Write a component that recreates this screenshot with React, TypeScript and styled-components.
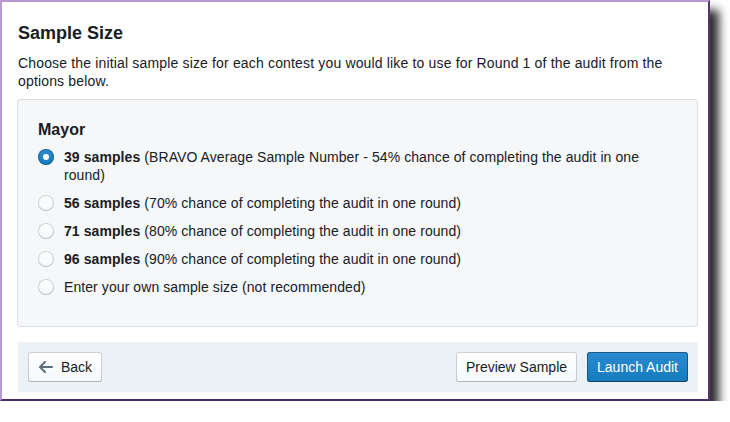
import styled, { createGlobalStyle } from "styled-components";

const GlobalStyle = createGlobalStyle`
  body {
    margin: 0;
    background: #ffffff;
    font-family: "Liberation Sans", Arial, sans-serif;
    color: #182026;
  }
`;

const options = [
  { samples: 39, detail: "(BRAVO Average Sample Number - 54% chance of completing the audit in one round)" },
  { samples: 56, detail: "(70% chance of completing the audit in one round)" },
  { samples: 71, detail: "(80% chance of completing the audit in one round)" },
  { samples: 96, detail: "(90% chance of completing the audit in one round)" },
];

const Card = styled.div`
  width: 710px;
  box-sizing: border-box;
  background: #ffffff;
  border: 2px solid;
  border-color: #b797d1 #55356f #4f2f68 #b99bd3;
  padding: 19px 10px 7px 16px;
  box-shadow: 9px 10px 9px rgba(0, 0, 0, 0.82);
`;

const Title = styled.h2`
  margin: 0 0 9px;
  font-size: 18px;
  line-height: 24px;
  font-weight: 700;
`;

const Description = styled.p`
  margin: 0 0 9px;
  font-size: 14px;
  line-height: 18px;
  letter-spacing: 0.16px;
`;

const Panel = styled.div`
  margin-left: -1px;
  background: #f5f7f9;
  border: 1px solid #dcdee2;
  border-radius: 3px;
  padding: 20px 21px 20px 20px;
`;

const ContestName = styled.h4`
  margin: 0 0 8px;
  font-size: 16px;
  line-height: 20px;
  font-weight: 700;
`;

const RadioRow = styled.label`
  display: flex;
  align-items: flex-start;
  gap: 10px;
  margin: 0 0 10px;
  font-size: 14px;
  line-height: 18px;
  letter-spacing: 0.08px;
  cursor: pointer;

  b {
    font-weight: 700;
  }
`;

const Indicator = styled.span<{ $checked: boolean }>`
  flex: none;
  position: relative;
  width: 16px;
  height: 16px;
  margin-top: 1px;
  border-radius: 50%;
  box-sizing: border-box;
  background: ${(p) =>
    p.$checked
      ? "linear-gradient(to bottom, #2e8bd0, #137cbd)"
      : "linear-gradient(to bottom, #ffffff, #f5f8fa)"};
  box-shadow: ${(p) =>
    p.$checked
      ? "inset 0 0 0 1px rgba(16, 22, 26, 0.3)"
      : "inset 0 0 0 1px rgba(16, 22, 26, 0.18), inset 0 -1px 0 rgba(16, 22, 26, 0.08)"};

  &::after {
    content: "";
    display: ${(p) => (p.$checked ? "block" : "none")};
    position: absolute;
    left: 5px;
    top: 5px;
    width: 6px;
    height: 6px;
    border-radius: 50%;
    background: #ffffff;
  }
`;

const Footer = styled.div`
  margin-top: 15px;
  background: #ebf1f5;
  padding: 10px;
  display: flex;
  align-items: center;
  gap: 10px;
`;

const Spacer = styled.div`
  flex: 1;
`;

const Button = styled.button<{ $primary?: boolean }>`
  display: inline-flex;
  align-items: center;
  gap: 7px;
  height: 30px;
  padding: 0 10px;
  border: none;
  border-radius: 3px;
  font-family: "Liberation Sans", Arial, sans-serif;
  font-size: 14px;
  cursor: pointer;
  color: ${(p) => (p.$primary ? "#ffffff" : "#182026")};
  background: ${(p) =>
    p.$primary
      ? "linear-gradient(to bottom, #2b8ad0, #137cbd)"
      : "linear-gradient(to bottom, #ffffff, #f5f8fa)"};
  box-shadow: ${(p) =>
    p.$primary
      ? "inset 0 0 0 1px rgba(16, 22, 26, 0.4), inset 0 -1px 0 rgba(16, 22, 26, 0.2)"
      : "inset 0 0 0 1px rgba(16, 22, 26, 0.2), inset 0 -1px 0 rgba(16, 22, 26, 0.1)"};

  svg {
    fill: #5c7080;
  }
`;

const ArrowLeft = () => (
  <svg width="16" height="16" viewBox="0 0 16 16">
    <path d="M13.99 6.99H4.41L7.7 3.7a1.003 1.003 0 00-1.42-1.42l-5 5c-.18.18-.29.43-.29.71 0 .28.11.53.29.71l5 5a1.003 1.003 0 001.42-1.42L4.41 8.99H14c.55 0 1-.45 1-1s-.46-1-1.01-1z" />
  </svg>
);

const App = () => {
  return (
    <>
      <GlobalStyle />
      <Card>
        <Title>Sample Size</Title>
        <Description>
          Choose the initial sample size for each contest you would like to use for Round 1 of the audit from the
          options below.
        </Description>
        <Panel>
          <ContestName>Mayor</ContestName>
          {options.map((o, i) => (
            <RadioRow key={o.samples}>
              <Indicator $checked={i === 0} />
              <span>
                <b>{o.samples} samples</b> {o.detail}
              </span>
            </RadioRow>
          ))}
          <RadioRow>
            <Indicator $checked={false} />
            <span>Enter your own sample size (not recommended)</span>
          </RadioRow>
        </Panel>
        <Footer>
          <Button>
            <ArrowLeft />
            Back
          </Button>
          <Spacer />
          <Button>Preview Sample</Button>
          <Button $primary>Launch Audit</Button>
        </Footer>
      </Card>
    </>
  );
};

export default App;
